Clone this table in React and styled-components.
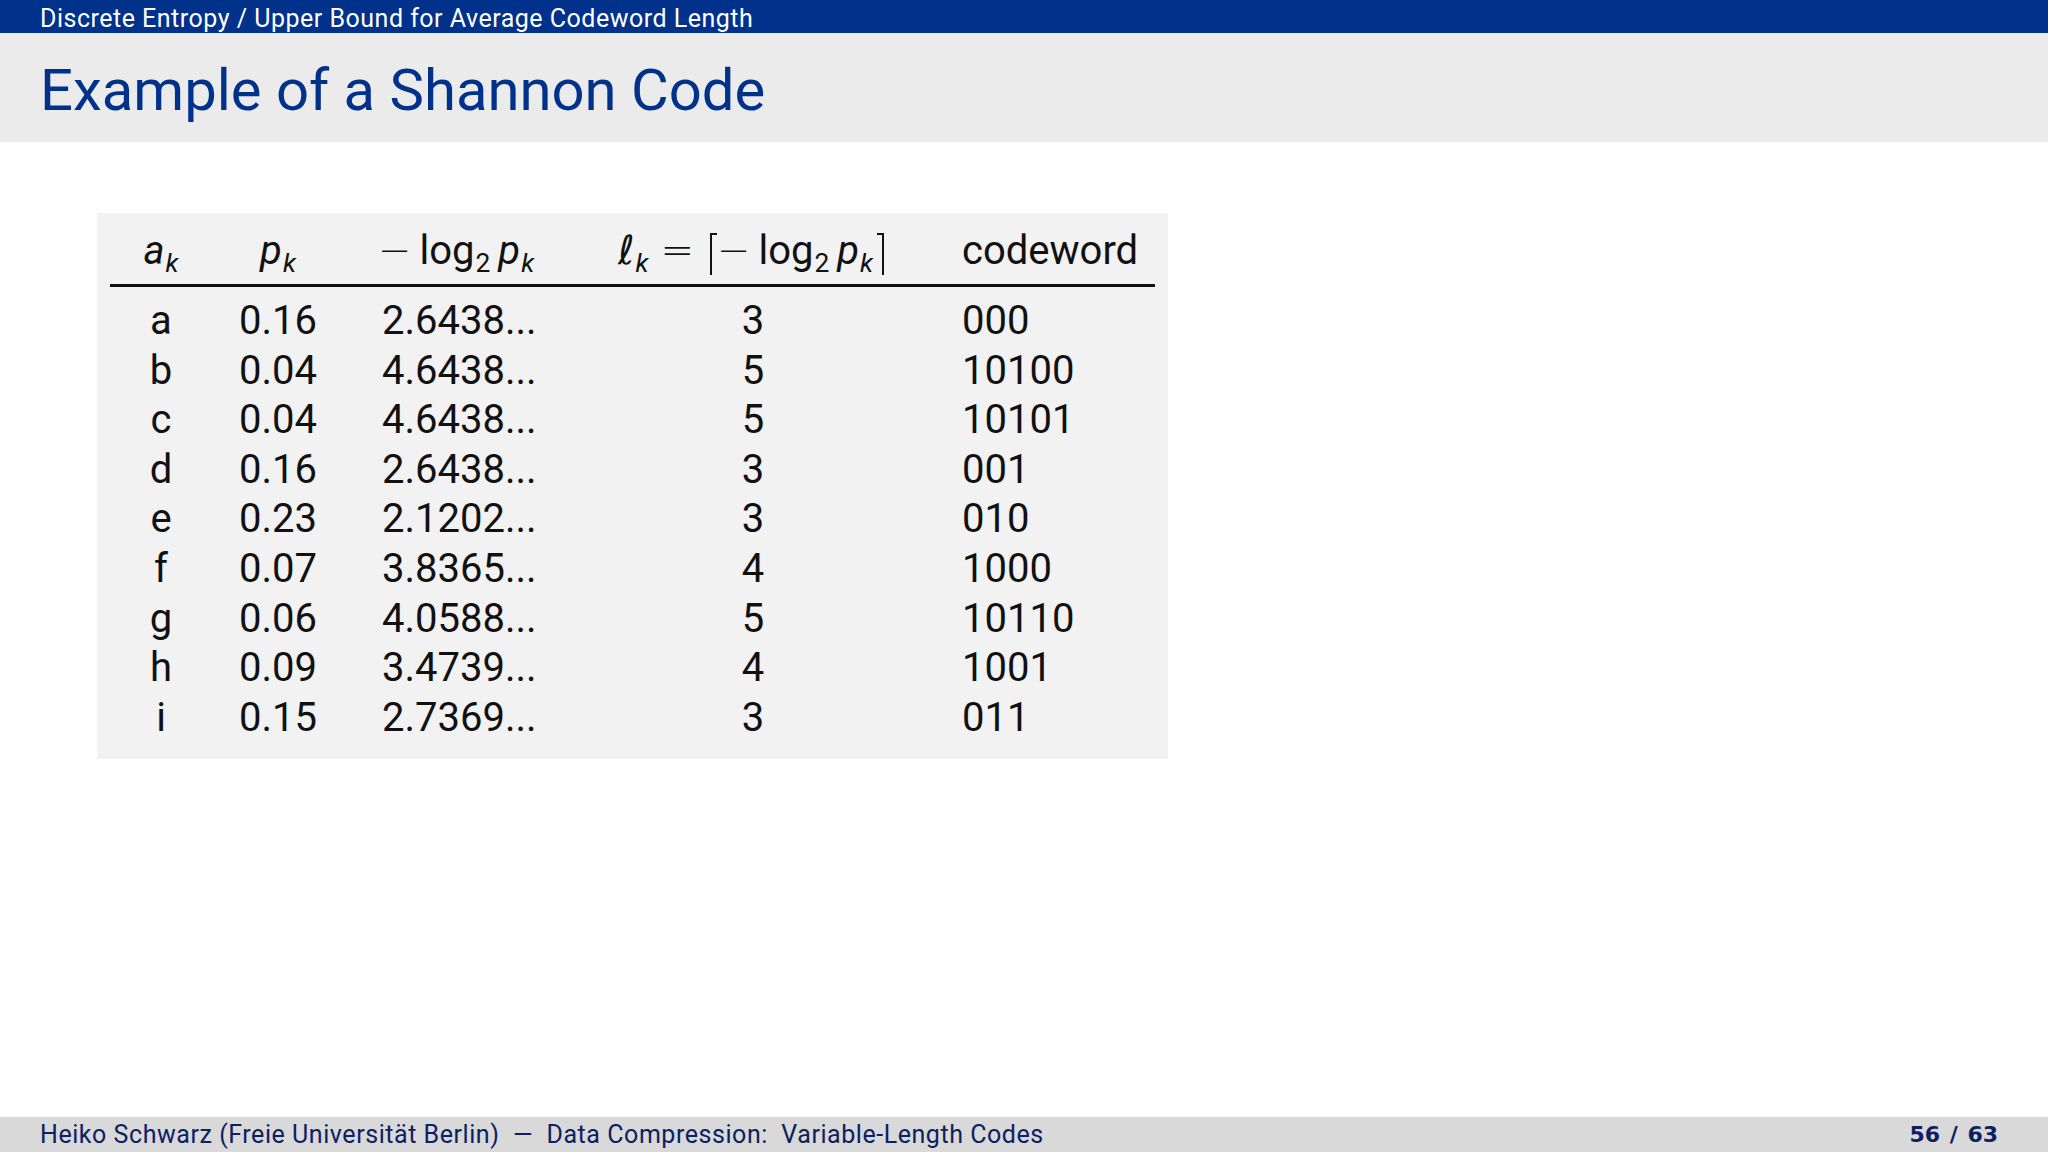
import React from "react";
import styled, { createGlobalStyle } from "styled-components";

const GlobalStyle = createGlobalStyle`
  html, body {
    margin: 0;
    padding: 0;
    background: #ffffff;
  }
  body {
    font-family: Roboto, "Liberation Sans", sans-serif;
  }
`;

const Slide = styled.div`
  width: 2048px;
  height: 1152px;
  display: flex;
  flex-direction: column;
  background: #ffffff;
  overflow: hidden;
`;

const TopBar = styled.div`
  height: 33px;
  box-sizing: border-box;
  background: #00318b;
  color: #ffffff;
  font-size: 25px;
  letter-spacing: 0.5px;
  line-height: 33px;
  padding: 2px 0 0 40px;
`;

const Header = styled.div`
  height: 109px;
  background: #ebebeb;
  display: flex;
  align-items: center;
  padding-left: 40px;
`;

const Title = styled.h1`
  margin: 0;
  font-weight: 400;
  font-size: 58px;
  color: #00318b;
  padding-top: 4px;
`;

const Body = styled.div`
  flex: 1;
  padding: 71px 0 0 97px;
`;

const Panel = styled.div`
  width: 1071px;
  background: #f2f2f2;
  padding: 3px 13px 17px 13px;
  box-sizing: border-box;
`;

const Grid = styled.div`
  display: grid;
  grid-template-columns: 102px 132px 228px 362px 221px;
  font-size: 40px;
  color: #111111;
`;

const HeadCell = styled.div`
  height: 68px;
  display: flex;
  align-items: baseline;
  align-content: flex-end;
  flex-wrap: wrap;
  padding-bottom: 10px;
  box-sizing: border-box;
  justify-content: ${({ $align }) => ($align === "left" ? "flex-start" : "center")};
  padding-left: ${({ $pad }) => $pad || 0}px;
  white-space: nowrap;
`;

const Rule = styled.div`
  grid-column: 1 / -1;
  height: 3px;
  background: #111111;
  margin-bottom: 9px;
`;

const Cell = styled.div`
  height: 49.6px;
  line-height: 49.6px;
  text-align: ${({ $align }) => $align || "center"};
  padding-left: ${({ $pad }) => $pad || 0}px;
  white-space: nowrap;
`;

const It = styled.span`
  font-style: italic;
`;

const Sub = styled.span`
  font-size: 0.66em;
  position: relative;
  top: 0.3em;
  margin-left: 1px;
  margin-right: ${({ $after }) => $after || 0}px;
`;

const Sym = styled.span`
  font-family: "DejaVu Sans", sans-serif;
  font-weight: 300;
  margin-left: ${({ $l }) => $l || 0}px;
  margin-right: ${({ $r }) => $r || 0}px;
  ${({ $it }) => $it && "font-style: italic;"}
`;

const Ceil = styled.span`
  display: inline-block;
  width: 7px;
  height: 42px;
  box-sizing: border-box;
  border-top: 2px solid #111111;
  ${({ $right }) =>
    $right ? "border-right: 2px solid #111111;" : "border-left: 2px solid #111111;"}
  margin: 0 4px;
  transform: translateY(11px);
`;

const Footer = styled.div`
  height: 35px;
  background: #d9d9d9;
  color: #0b2162;
  font-size: 25px;
  display: flex;
  align-items: center;
  justify-content: space-between;
  padding: 0 50px 0 40px;
`;

const FooterText = styled.span`
  letter-spacing: 0.55px;
`;

const PageNo = styled.span`
  font-weight: 700;
  font-family: "DejaVu Sans", sans-serif;
  font-size: 22px;
  word-spacing: 2px;
`;

const rows = [
  ["a", "0.16", "2.6438...", "3", "000"],
  ["b", "0.04", "4.6438...", "5", "10100"],
  ["c", "0.04", "4.6438...", "5", "10101"],
  ["d", "0.16", "2.6438...", "3", "001"],
  ["e", "0.23", "2.1202...", "3", "010"],
  ["f", "0.07", "3.8365...", "4", "1000"],
  ["g", "0.06", "4.0588...", "5", "10110"],
  ["h", "0.09", "3.4739...", "4", "1001"],
  ["i", "0.15", "2.7369...", "3", "011"],
];

const NegLog = () => (
  <>
    <Sym $l={-4} $r={8}>
      −
    </Sym>
    <span>log</span>
    <Sub $after={8}>2</Sub>
    <It>p</It>
    <Sub>
      <It>k</It>
    </Sub>
  </>
);

export default function App() {
  return (
    <>
      <GlobalStyle />
      <Slide>
        <TopBar>Discrete Entropy / Upper Bound for Average Codeword Length</TopBar>
        <Header>
          <Title>Example of a Shannon Code</Title>
        </Header>
        <Body>
          <Panel>
            <Grid>
              <HeadCell>
                <It>a</It>
                <Sub>
                  <It>k</It>
                </Sub>
              </HeadCell>
              <HeadCell>
                <It>p</It>
                <Sub>
                  <It>k</It>
                </Sub>
              </HeadCell>
              <HeadCell $align="left" $pad={38}>
                <NegLog />
              </HeadCell>
              <HeadCell>
                <Sym $it>ℓ</Sym>
                <Sub>
                  <It>k</It>
                </Sub>
                <Sym $l={12} $r={12}>
                  =
                </Sym>
                <Ceil />
                <NegLog />
                <Ceil $right />
              </HeadCell>
              <HeadCell $align="left" $pad={28}>
                codeword
              </HeadCell>
              <Rule />
              {rows.map((r) => (
                <React.Fragment key={r[0]}>
                  <Cell>{r[0]}</Cell>
                  <Cell>{r[1]}</Cell>
                  <Cell $align="left" $pad={38}>
                    {r[2]}
                  </Cell>
                  <Cell>{r[3]}</Cell>
                  <Cell $align="left" $pad={28}>
                    {r[4]}
                  </Cell>
                </React.Fragment>
              ))}
            </Grid>
          </Panel>
        </Body>
        <Footer>
          <FooterText>
            Heiko Schwarz (Freie Universität Berlin) &nbsp;— &nbsp;Data Compression:&nbsp; Variable-Length Codes
          </FooterText>
          <PageNo>56 / 63</PageNo>
        </Footer>
      </Slide>
    </>
  );
}
